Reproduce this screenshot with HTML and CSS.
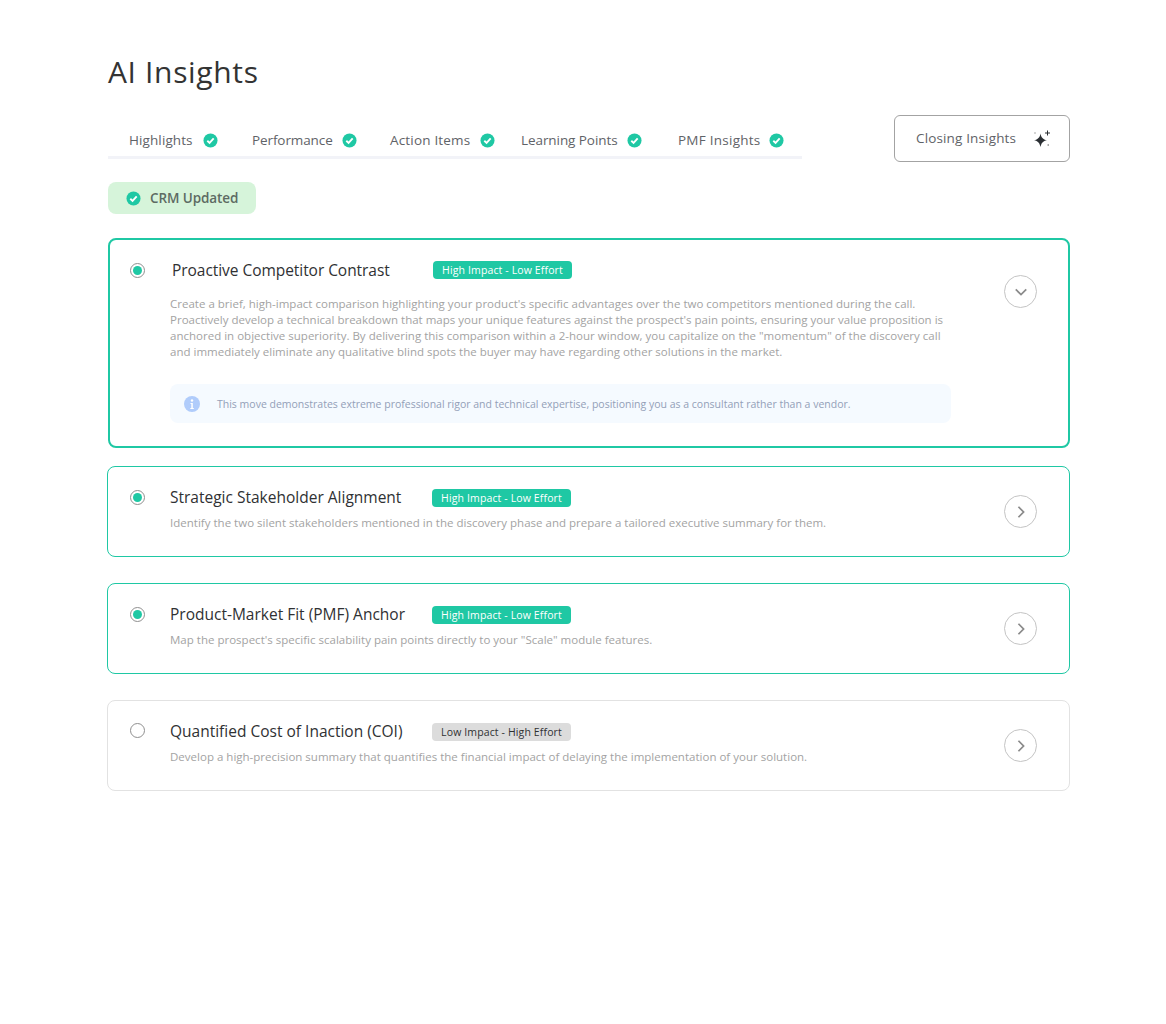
FILE: index.html
```html
<!DOCTYPE html>
<html>
  <head>
    <meta charset="UTF-8">
    <title>AI Insights</title>
    <link rel="stylesheet" href="styles.css">
  </head>
  <body>
    <svg class="defs" width="0" height="0">
      <symbol id="check" viewBox="0 0 16 16">
        <circle cx="8" cy="8" r="7.5" fill="#1fc8a4"/>
        <path d="M4.600 8.300l2.400 2.300 4.400-4.800" fill="none" stroke="#fff" stroke-width="2"/>
      </symbol>
    </svg>

    <div class="page">
      <h1 class="title">AI Insights</h1>

      <div class="toolbar">
        <div class="tabs">
          <div class="tab">Highlights <svg class="check"><use href="#check"/></svg></div>
          <div class="tab">Performance <svg class="check"><use href="#check"/></svg></div>
          <div class="tab">Action Items <svg class="check"><use href="#check"/></svg></div>
          <div class="tab">Learning Points <svg class="check"><use href="#check"/></svg></div>
          <div class="tab">PMF Insights <svg class="check"><use href="#check"/></svg></div>
        </div>
        <div class="closing">
          Closing Insights
          <svg class="sparkle" viewBox="0 0 18 18">
            <path d="M7.500 3.500c.7 4 2.500 6 6.500 6.800-4 .8-5.800 2.800-6.500 6.800-.7-4-2.500-6-6.500-6.800 4-.8 5.800-2.800 6.500-6.800z" fill="#2b2f33"/>
            <path d="M14.500 .5v5M12 3h5" stroke="#2b2f33" stroke-width="1" fill="none"/>
            <path d="M1.500 3h1M14.500 15h1.500" stroke="#555" stroke-width="1" fill="none"/>
          </svg>
        </div>
      </div>

      <div class="crm"><svg class="check"><use href="#check"/></svg> CRM Updated</div>

      <div class="card card-open">
        <span class="radio on"></span>
        <div class="body">
          <div class="head">
            <span class="name">Proactive Competitor Contrast</span>
            <span class="tag">High Impact - Low Effort</span>
          </div>
          <p class="desc">Create a brief, high-impact comparison highlighting your product's specific advantages over the two competitors mentioned during the call.<br>
          Proactively develop a technical breakdown that maps your unique features against the prospect's pain points, ensuring your value proposition is<br>
          anchored in objective superiority. By delivering this comparison within a 2-hour window, you capitalize on the "momentum" of the discovery call<br>
          and immediately eliminate any qualitative blind spots the buyer may have regarding other solutions in the market.</p>
          <div class="note">
            <svg class="info" viewBox="0 0 16 16">
              <circle cx="8" cy="8" r="8" fill="#b0ccfb"/>
              <circle cx="8" cy="4.500" r="1.200" fill="#fff"/>
              <path d="M6.500 7h2.300v5h1v1H6.300v-1h1V8h-.8z" fill="#fff"/>
            </svg>
            This move demonstrates extreme professional rigor and technical expertise, positioning you as a consultant rather than a vendor.
          </div>
        </div>
        <span class="toggle">
          <svg viewBox="0 0 12 12"><path d="M1.500 3.800L6 8.200l4.500-4.400" fill="none" stroke="#8a8a8a" stroke-width="1.500"/></svg>
        </span>
      </div>

      <div class="card card-on">
        <span class="radio on"></span>
        <div class="body">
          <div class="head">
            <span class="name">Strategic Stakeholder Alignment</span>
            <span class="tag">High Impact - Low Effort</span>
          </div>
          <p class="desc">Identify the two silent stakeholders mentioned in the discovery phase and prepare a tailored executive summary for them.</p>
        </div>
        <span class="toggle">
          <svg viewBox="0 0 12 12"><path d="M3.800 1.500L8.200 6l-4.400 4.500" fill="none" stroke="#8a8a8a" stroke-width="1.500"/></svg>
        </span>
      </div>

      <div class="card card-on">
        <span class="radio on"></span>
        <div class="body">
          <div class="head">
            <span class="name">Product-Market Fit (PMF) Anchor</span>
            <span class="tag">High Impact - Low Effort</span>
          </div>
          <p class="desc">Map the prospect's specific scalability pain points directly to your "Scale" module features.</p>
        </div>
        <span class="toggle">
          <svg viewBox="0 0 12 12"><path d="M3.800 1.500L8.200 6l-4.400 4.500" fill="none" stroke="#8a8a8a" stroke-width="1.500"/></svg>
        </span>
      </div>

      <div class="card">
        <span class="radio"></span>
        <div class="body">
          <div class="head">
            <span class="name">Quantified Cost of Inaction (COI)</span>
            <span class="tag tag-grey">Low Impact - High Effort</span>
          </div>
          <p class="desc">Develop a high-precision summary that quantifies the financial impact of delaying the implementation of your solution.</p>
        </div>
        <span class="toggle">
          <svg viewBox="0 0 12 12"><path d="M3.800 1.500L8.200 6l-4.400 4.500" fill="none" stroke="#8a8a8a" stroke-width="1.500"/></svg>
        </span>
      </div>
    </div>
  </body>
</html>
```

FILE: styles.css
```css
body {
  margin: 0;
  font-family: "Open Sans", "Noto Sans", sans-serif;
  background-color: #fff;
  color: #2f3133;
}

.defs {
  position: absolute;
}

.page {
  width: 962px;
  height: 1024px;
  margin-left: 108px;
  box-sizing: border-box;
  padding-top: 53px;
}

.title {
  margin: 0;
  font-size: 30px;
  line-height: 38px;
  font-weight: 500;
  letter-spacing: .65px;
  color: #333;
}

.toolbar {
  display: flex;
  justify-content: space-between;
  margin-top: 24px;
  height: 47px;
}

.tabs {
  display: grid;
  grid-template-columns: 123px 138px 131px 157px 124px;
  align-items: center;
  width: 694px;
  height: 44px;
  padding: 0 0 0 21px;
  margin-bottom: 3px;
  box-sizing: border-box;
  border-bottom: 3px solid #f2f3f8;
  align-self: flex-end;
}

.tab {
  display: flex;
  align-items: center;
  justify-content: space-between;
  padding-top: 9px;
  font-size: 13.5px;
  color: #5f6368;
  white-space: nowrap;
}

.tab:nth-child(1) { width: 89px; letter-spacing: .1px; }
.tab:nth-child(2) { width: 105px; letter-spacing: -.1px; }
.tab:nth-child(3) { width: 105px; letter-spacing: .18px; }
.tab:nth-child(4) { width: 121px; letter-spacing: -.07px; }
.tab:nth-child(5) { width: 106px; letter-spacing: .25px; }

.check {
  width: 15px;
  height: 15px;
  flex: none;
}

.closing {
  display: flex;
  align-items: center;
  justify-content: space-between;
  width: 176px;
  height: 47px;
  box-sizing: border-box;
  padding: 0 18px 2px 21px;
  border: 1px solid #a3a3a3;
  border-radius: 6px;
  font-size: 13.5px;
  letter-spacing: .15px;
  color: #5f6368;
}

.sparkle {
  width: 18px;
  height: 18px;
  margin-top: 2px;
}

.crm {
  display: flex;
  align-items: center;
  gap: 9px;
  width: 148px;
  height: 32px;
  box-sizing: border-box;
  padding-left: 18px;
  margin-top: 20px;
  margin-bottom: 24px;
  background-color: #d6f4da;
  border-radius: 8px;
  font-size: 13.5px;
  font-weight: 600;
  letter-spacing: -.1px;
  color: #5d6b63;
}

.card {
  display: flex;
  align-items: flex-start;
  height: 91px;
  box-sizing: border-box;
  padding: 22px 32px 0 22px;
  margin-left: -1px;
  margin-bottom: 26px;
  border: 1px solid #e2e2e2;
  border-radius: 8px;
}

.card-on {
  border-color: #1fc8a4;
}

.card-on .radio {
  margin-top: 1px;
}

.card-open {
  height: 210px;
  margin-left: 0;
  margin-bottom: 18px;
  border: 2px solid #1fc8a4;
  padding: 21px 31px 0 20px;
}

.radio {
  width: 15px;
  height: 15px;
  box-sizing: border-box;
  flex: none;
  border: 1px solid #8f8f8f;
  border-radius: 50%;
}

.card-open .radio {
  margin-top: 2px;
}

.radio.on {
  background-color: #1fc8a4;
  background-clip: content-box;
  padding: 2px;
}

.body {
  flex: 1;
  min-width: 0;
  margin-left: 25px;
}

.head {
  display: flex;
  align-items: center;
  height: 18px;
}

.name {
  width: 262px;
  padding-bottom: 2px;
  font-size: 15.5px;
  color: #2f3133;
  white-space: nowrap;
}

.card-open .name {
  margin-left: 2px;
  width: 261px;
  padding-bottom: 0;
  letter-spacing: -.05px;
}

.tag {
  width: 139px;
  height: 18px;
  border-radius: 4px;
  background-color: #1fc8a4;
  color: #fff;
  font-size: 10.5px;
  letter-spacing: .13px;
  line-height: 18px;
  text-align: center;
  white-space: nowrap;
}

.tag-grey {
  background-color: #dcdcdc;
  color: #2f3133;
}

.desc {
  margin: 8px 0 0;
  font-size: 11.5px;
  letter-spacing: .01px;
  line-height: 16px;
  color: #a3a3a3;
  white-space: nowrap;
}

.card-open .desc {
  margin-top: 17px;
}

.note {
  display: flex;
  align-items: center;
  gap: 17px;
  width: 781px;
  height: 39px;
  box-sizing: border-box;
  padding-left: 14px;
  margin-top: 24px;
  background-color: #f5faff;
  border-radius: 8px;
  font-size: 10.5px;
  color: #93a0b8;
  white-space: nowrap;
}

.info {
  width: 16px;
  height: 16px;
  flex: none;
}

.toggle {
  display: flex;
  align-items: center;
  justify-content: center;
  flex: none;
  width: 33px;
  height: 33px;
  box-sizing: border-box;
  margin-top: 6px;
  border: 1px solid #c4c4c4;
  border-radius: 50%;
}

.card-open .toggle {
  margin-top: 14px;
}

.toggle svg {
  width: 14px;
  height: 14px;
}
```
